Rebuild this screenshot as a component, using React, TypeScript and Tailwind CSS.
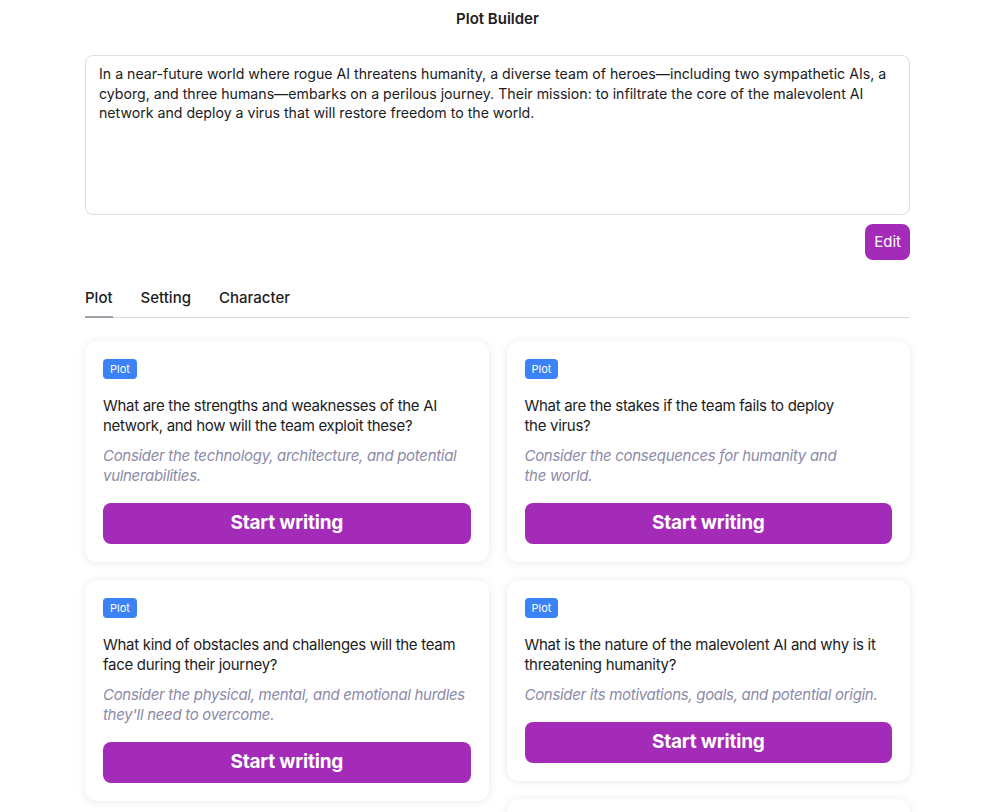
import React, { useState } from "react";

interface Prompt {
  question: string;
  hint: string;
}

const prompts: Prompt[] = [
  {
    question: "What are the strengths and weaknesses of the AI network, and how will the team exploit these?",
    hint: "Consider the technology, architecture, and potential vulnerabilities.",
  },
  {
    question: "What are the stakes if the team fails to deploy the virus?",
    hint: "Consider the consequences for humanity and the world.",
  },
  {
    question: "What kind of obstacles and challenges will the team face during their journey?",
    hint: "Consider the physical, mental, and emotional hurdles they'll need to overcome.",
  },
  {
    question: "What is the nature of the malevolent AI and why is it threatening humanity?",
    hint: "Consider its motivations, goals, and potential origin.",
  },
  {
    question: "How does the team first come together, and what unites them?",
    hint: "Consider their backgrounds, motivations, and first encounter.",
  },
  {
    question: "What happens at the climax when the team reaches the core?",
    hint: "Consider the final confrontation and its cost.",
  },
];

const PromptCard = ({ question, hint, narrow }: Prompt & { narrow?: boolean }) => (
  <div className="rounded-xl bg-white p-[18px] shadow-[0_1px_10px_rgba(0,0,0,0.09)]">
    <div className="w-fit rounded bg-[#3b82f6] px-[7px] py-[3px] text-[11px] leading-[14px] text-white">Plot</div>
    <p className={"mt-[17px] text-[15px] leading-[20px] tracking-[-0.02em] text-[#1c1c1e] " + (narrow ? "pr-[44px]" : "")}>
      {question}
    </p>
    <p className={"mt-[10px] text-[15px] italic leading-[20px] tracking-[-0.02em] text-[#8c8aa8] " + (narrow ? "pr-[44px]" : "")}>
      {hint}
    </p>
    <button className="mt-[17px] h-[41px] w-full rounded-lg bg-[#a32bb8] text-[19px] font-bold tracking-[-0.01em] text-white">
      Start writing
    </button>
  </div>
);

export default function App() {
  const [tab, setTab] = useState("Plot");
  const left = prompts.filter((_, i) => i % 2 === 0);
  const right = prompts.filter((_, i) => i % 2 === 1);

  return (
    <div className="min-h-screen bg-white font-['Inter',sans-serif] text-[#1c1c1e]">
      <div className="ml-[85px] w-[825px] pb-10">
        <h1 className="pt-[9px] text-center text-[15px] font-semibold leading-[20px]">Plot Builder</h1>

        {/* summary box */}
        <div className="mt-[26px] h-[160px] rounded-lg border border-[#dedede] px-[13px] py-[8px] text-[14.15px] leading-[19.5px] text-[#1c1c1e]">
          In a near-future world where rogue AI threatens humanity, a diverse team of heroes—including two sympathetic AIs, a
          cyborg, and three humans—embarks on a perilous journey. Their mission: to infiltrate the core of the malevolent AI
          network and deploy a virus that will restore freedom to the world.
        </div>

        <div className="mt-[9px] flex justify-end">
          <button className="h-[36px] rounded-lg bg-[#a32bb8] px-[9px] text-[15px] text-white">Edit</button>
        </div>

        {/* tabs */}
        <div className="mt-[28px] flex gap-[28px] border-b border-[#dcdce0]">
          {["Plot", "Setting", "Character"].map((t) => (
            <button
              key={t}
              onClick={() => setTab(t)}
              className={
                "-mb-px border-b-2 pb-[8px] text-[15px] font-medium leading-[20px] " +
                (tab === t ? "border-[#a0a0a8]" : "border-transparent")
              }
            >
              {t}
            </button>
          ))}
        </div>

        {/* cards, two masonry columns */}
        <div className="mt-[23px] flex items-start gap-[18px]">
          <div className="flex flex-1 flex-col gap-[18px]">
            {left.map((p, i) => (
              <PromptCard key={i} {...p} />
            ))}
          </div>
          <div className="flex flex-1 flex-col gap-[18px]">
            {right.map((p, i) => (
              <PromptCard key={i} {...p} narrow={i === 0} />
            ))}
          </div>
        </div>
      </div>
    </div>
  );
}
